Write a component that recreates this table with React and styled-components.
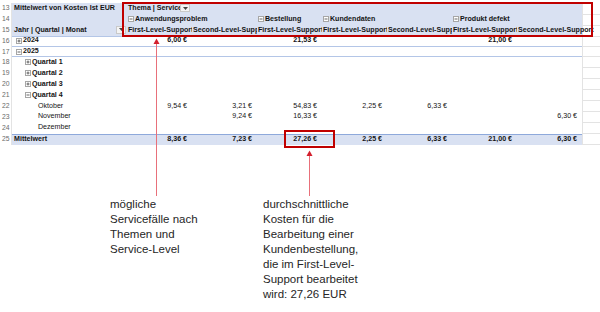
import React from 'react';
import styled, { createGlobalStyle } from 'styled-components';

const GlobalStyle = createGlobalStyle`
	html, body {
		margin: 0;
		padding: 0;
		background: #ffffff;
	}
	body {
		font-family: "Liberation Sans", Arial, sans-serif;
	}
`;

const levels = [
	'First-Level-Support',
	'Second-Level-Support',
	'First-Level-Support',
	'First-Level-Support',
	'Second-Level-Support',
	'First-Level-Support',
	'Second-Level-Support',
];

const themes = [
	{ col: 0, name: 'Anwendungsproblem' },
	{ col: 2, name: 'Bestellung' },
	{ col: 3, name: 'Kundendaten' },
	{ col: 5, name: 'Produkt defekt' },
];

// left padding of the row label per outline level
const indents = [4, 13, 26];

const rows = [
	{ n: 16, label: '2024', level: 0, icon: 'plus', bold: true, line: true, values: ['6,00 €', '', '21,53 €', '', '', '21,00 €', ''] },
	{ n: 17, label: '2025', level: 0, icon: 'minus', bold: true, line: true, values: [] },
	{ n: 18, label: 'Quartal 1', level: 1, icon: 'plus', bold: true, values: [] },
	{ n: 19, label: 'Quartal 2', level: 1, icon: 'plus', bold: true, values: [] },
	{ n: 20, label: 'Quartal 3', level: 1, icon: 'plus', bold: true, values: [] },
	{ n: 21, label: 'Quartal 4', level: 1, icon: 'minus', bold: true, values: [] },
	{ n: 22, label: 'Oktober', level: 2, values: ['9,54 €', '3,21 €', '54,83 €', '2,25 €', '6,33 €', '', ''] },
	{ n: 23, label: 'November', level: 2, values: ['', '9,24 €', '16,33 €', '', '', '', '6,30 €'] },
	{ n: 24, label: 'Dezember', level: 2, values: [] },
];

const totals = ['8,36 €', '7,23 €', '27,26 €', '2,25 €', '6,33 €', '21,00 €', '6,30 €'];

const Toggle = ({ type }) => (
	<ToggleBox width="6" height="6" viewBox="0 0 6 6">
		<rect x="0.5" y="0.5" width="5" height="5" fill="#fff" stroke="#a6a6a6" />
		<line x1="1.5" y1="3" x2="4.5" y2="3" stroke="#555" strokeWidth="0.9" />
		{type === 'plus' && <line x1="3" y1="1.5" x2="3" y2="4.5" stroke="#555" strokeWidth="0.9" />}
	</ToggleBox>
);

const Dropdown = ({ right }) => (
	<DropButton $right={right}>
		<svg width="5" height="3" viewBox="0 0 5 3">
			<path d="M0 0 L5 0 L2.5 3 Z" fill="#444" />
		</svg>
	</DropButton>
);

const App = () => {
	return (
		<>
			<GlobalStyle />
			<Page>
				<Sheet>
					<Row>
						<RowNum>13</RowNum>
						<Label $head $bold>Mittelwert von Kosten Ist EUR</Label>
						<Cell $head $bold $overflow>
							Thema | Service
							<Dropdown right={2} />
						</Cell>
						{levels.slice(1).map((_, i) => (
							<Cell key={i} $head />
						))}
						<Spare />
					</Row>
					<Row>
						<RowNum>14</RowNum>
						<Label $head />
						{levels.map((_, i) => {
							const theme = themes.find((t) => t.col === i);
							return (
								<Cell key={i} $head $bold $overflow={!!theme}>
									{theme && (
										<>
											<Toggle type="minus" />
											{theme.name}
										</>
									)}
								</Cell>
							);
						})}
						<Spare />
					</Row>
					<Row>
						<RowNum>15</RowNum>
						<Label $head $bold $underline>
							Jahr | Quartal | Monat
							<Dropdown right={1} />
						</Label>
						{levels.map((lvl, i) => (
							<Cell key={i} $head $bold $underline $overflow={i === levels.length - 1}>
								{lvl}
							</Cell>
						))}
						<Spare />
					</Row>
					{rows.map((row) => (
						<Row key={row.n}>
							<RowNum>{row.n}</RowNum>
							<Label $bold={row.bold} $indent={indents[row.level]} $underline={row.line}>
								{row.icon && <Toggle type={row.icon} />}
								{row.label}
							</Label>
							{levels.map((_, i) => (
								<Cell key={i} $value $bold={row.bold} $underline={row.line}>
									{row.values[i]}
								</Cell>
							))}
							<Spare />
						</Row>
					))}
					<Row>
						<RowNum>25</RowNum>
						<Label $total $bold>Mittelwert</Label>
						{totals.map((v, i) => (
							<Cell key={i} $total $value $bold>
								{v}
							</Cell>
						))}
						<Spare />
					</Row>

					<Highlight $left={122} $top={2} $width={471} $height={35} />
					<Highlight $left={284} $top={130} $width={51} $height={18} />
				</Sheet>

				<Notes>
					<Note $width={153}>
						mögliche
						<br />
						Servicefälle nach
						<br />
						Themen und
						<br />
						Service-Level
					</Note>
					<Note>
						durchschnittliche
						<br />
						Kosten für die
						<br />
						Bearbeitung einer
						<br />
						Kundenbestellung,
						<br />
						die im First-Level-
						<br />
						Support bearbeitet
						<br />
						wird: 27,26 EUR
					</Note>
				</Notes>

				<Arrows width="600" height="312" viewBox="0 0 600 312">
					<line x1="156.5" y1="42" x2="156.5" y2="196" stroke="#e8707a" strokeWidth="1" />
					<path d="M153.5 44 L156.5 38.5 L159.5 44 Z" fill="#d3202e" />
					<line x1="309.5" y1="154" x2="309.5" y2="196" stroke="#e8707a" strokeWidth="1" />
					<path d="M306.5 156 L309.5 150.5 L312.5 156 Z" fill="#d3202e" />
				</Arrows>
			</Page>
		</>
	);
};

export default App;

/* Styles --- */

const Page = styled.div`
	position: relative;
	width: 600px;
	height: 312px;
	overflow: hidden;
	background: #ffffff;
`;

const Sheet = styled.div`
	position: relative;
	display: flex;
	flex-direction: column;
	padding-top: 3px;
`;

const Row = styled.div`
	display: grid;
	grid-template-columns: 12px 115px repeat(7, 65px) 1fr;
	height: 10.9px;
	font-size: 7.1px;
	line-height: 10.9px;
	color: #141414;
`;

const RowNum = styled.div`
	padding-left: 2px;
	color: #6b6b6b;
	font-size: 6.8px;
	border-right: 1px solid #e3e3e3;
`;

const Cell = styled.div`
	position: relative;
	display: flex;
	align-items: center;
	justify-content: ${(p) => (p.$value ? 'flex-end' : 'flex-start')};
	padding: ${(p) => (p.$value ? '0 5px 0 0' : '0 0 0 1px')};
	white-space: nowrap;
	overflow: ${(p) => (p.$overflow ? 'visible' : 'hidden')};
	z-index: ${(p) => (p.$overflow ? 1 : 0)};
	font-weight: ${(p) => (p.$bold ? 700 : 400)};
	background: ${(p) => (p.$head || p.$total ? '#d9e1f2' : 'transparent')};
	border-bottom: 1px solid ${(p) => (p.$underline ? '#b4c6e7' : 'transparent')};
	border-top: ${(p) => (p.$total ? '1px solid #8ea9db' : 'none')};
	box-sizing: border-box;
`;

const Label = styled(Cell)`
	justify-content: flex-start;
	padding: 0 0 0 ${(p) => p.$indent ?? 2}px;
`;

const Spare = styled.div`
	border-left: 1px solid #e3e3e3;
	border-bottom: 1px solid #e3e3e3;
	box-sizing: border-box;
`;

const ToggleBox = styled.svg`
	flex: none;
	margin-right: 1px;
`;

const DropButton = styled.span`
	position: absolute;
	top: 1px;
	right: ${(p) => p.$right}px;
	width: 10px;
	height: 8px;
	display: flex;
	align-items: center;
	justify-content: center;
	background: #f4f4f4;
	border: 1px solid #c9c9c9;
	box-sizing: border-box;
`;

const Highlight = styled.div`
	position: absolute;
	left: ${(p) => p.$left}px;
	top: ${(p) => p.$top}px;
	width: ${(p) => p.$width}px;
	height: ${(p) => p.$height}px;
	border: 2.5px solid #c00000;
	box-sizing: border-box;
	z-index: 3;
	pointer-events: none;
`;

const Notes = styled.div`
	display: flex;
	padding: 52px 0 0 110px;
`;

const Note = styled.div`
	width: ${(p) => (p.$width ? `${p.$width}px` : 'auto')};
	font-family: "Liberation Sans", Arial, sans-serif;
	font-size: 11.5px;
	line-height: 15px;
	color: #262626;
`;

const Arrows = styled.svg`
	position: absolute;
	left: 0;
	top: 0;
	z-index: 4;
	pointer-events: none;
`;
